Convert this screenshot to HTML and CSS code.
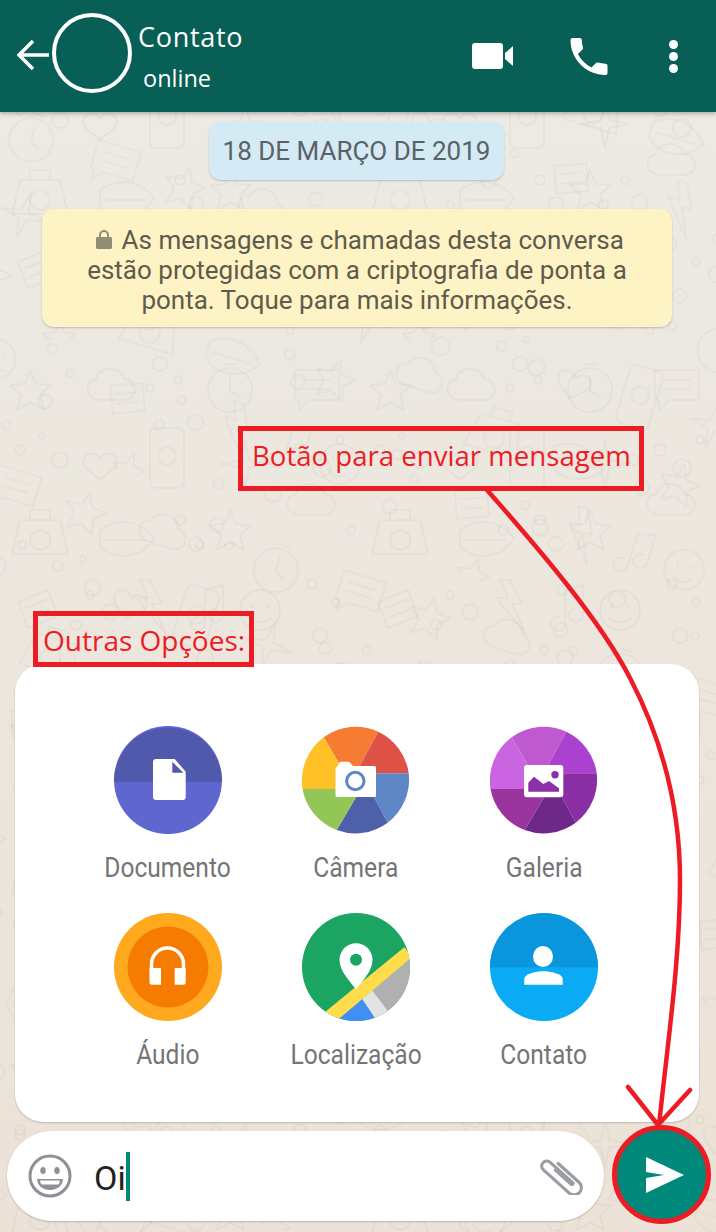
FILE: index.html
```html
<!DOCTYPE html>
<html lang="pt-BR">
<head>
    <meta charset="UTF-8">
    <meta name="viewport" content="width=device-width, initial-scale=1.0">
    <title>Contato</title>
    <link rel="stylesheet" href="styles.css">
</head>
<body>
<div class="screen">
    <!-- doodle wallpaper -->
    <svg class="wallpaper" width="716" height="1232">
        <defs>
            <pattern id="doodles" width="360" height="340" patternUnits="userSpaceOnUse">
                <g fill="none" stroke="#000" stroke-opacity=".035" stroke-width="1.700" stroke-linejoin="round" stroke-linecap="round">
                    <path d="M30 30l6 14 15 1-11 10 4 15-14-8-13 8 4-15-11-10 15-1z"/>
                    <path d="M100 60c-14 0-18-18-4-21 3-14 26-13 28 0 14 1 15 20 0 21z"/>
                    <circle cx="160" cy="24" r="7"/><circle cx="178" cy="40" r="4"/><circle cx="150" cy="48" r="4"/>
                    <circle cx="230" cy="50" r="22"/><path d="M230 36v15l10 6M224 24h12"/>
                    <path d="M295 30h44v30h-30l-10 10v-10h-4zM304 40h26M304 49h26"/>
                    <circle cx="20" cy="110" r="5"/><circle cx="60" cy="120" r="8"/><circle cx="42" cy="96" r="3"/>
                    <path d="M100 140c-8-8-20-12-16-22 4-7 13-5 16 1 3-6 12-8 16-1 4 10-8 14-16 22z"/>
                    <rect x="150" y="88" width="34" height="60" rx="6"/><circle cx="167" cy="116" r="9"/>
                    <path d="M245 100l4 20 20 4-20 4-4 20-4-20-20-4 20-4z"/>
                    <circle cx="300" cy="110" r="6"/><circle cx="322" cy="128" r="9"/><circle cx="340" cy="100" r="4"/>
                    <path d="M20 180h40l8 34H12zM30 180v-10h20v10M40 190a10 10 0 1 0 .1 0"/>
                    <path d="M100 190c20-14 42-8 54 8-12 20-40 24-54 8zM106 200h40"/>
                    <circle cx="180" cy="180" r="5"/><circle cx="196" cy="204" r="7"/>
                    <path d="M230 170l6 14 15 1-11 10 4 15-14-8-13 8 4-15-11-10 15-1z"/>
                    <path d="M300 175c-14 0-18-18-4-21 3-14 26-13 28 0 14 1 15 20 0 21z"/>
                    <path d="M18 262l30-12 10 26-30 12zM26 268l20-8M30 277l20-8"/>
                    <circle cx="90" cy="255" r="4"/><circle cx="110" cy="272" r="8"/><circle cx="76" cy="285" r="5"/>
                    <path d="M150 240l12 24-10 0 14 30-30-36 12 0-8-18z"/>
                    <path d="M205 250v34a7 7 0 1 1-6-7M205 250l18-5v30a7 7 0 1 1-6-7"/>
                    <circle cx="260" cy="270" r="20"/><path d="M252 264v3M268 264v3M250 278c6 6 14 6 20 0"/>
                    <circle cx="312" cy="244" r="5"/><circle cx="336" cy="262" r="4"/><circle cx="320" cy="296" r="7"/>
                    <path d="M60 320l4 12 12 2-9 8 2 12-9-6-11 6 3-12-9-8 12-2z"/>
                    <circle cx="150" cy="325" r="5"/><circle cx="205" cy="318" r="8"/><circle cx="290" cy="330" r="4"/>
                </g>
            </pattern>
            <pattern id="doodlesTurned" href="#doodles" patternTransform="translate(170 130) rotate(17)"/>
        </defs>
        <rect width="716" height="1232" fill="url(#doodles)"/>
        <rect width="716" height="1232" fill="url(#doodlesTurned)"/>
    </svg>

    <header class="topbar">
        <svg class="back" width="32" height="30" viewBox="0 0 32 30"><path d="M32 15H2M16 1L2 15l14 14" fill="none" stroke="#fff" stroke-width="3.500"/></svg>
        <div class="avatar"></div>
        <div class="contact">
            <div class="contact-name">Contato</div>
            <div class="contact-status">online</div>
        </div>
        <svg class="video" width="42" height="26" viewBox="0 0 42 26"><rect width="31" height="26" rx="3" fill="#fff"/><path d="M33 10l8-7v20l-8-7z" fill="#fff"/></svg>
        <svg class="phone" width="38" height="37" viewBox="3 3 18 18"><path fill="#fff" d="M6.62 10.79c1.44 2.83 3.76 5.14 6.59 6.59l2.2-2.2c.27-.27.67-.36 1.02-.24 1.12.37 2.33.57 3.57.57.55 0 1 .45 1 1V20c0 .55-.45 1-1 1-9.39 0-17-7.61-17-17 0-.55.45-1 1-1h3.5c.55 0 1 .45 1 1 0 1.25.2 2.45.57 3.57.11.35.03.74-.25 1.02l-2.2 2.2z"/></svg>
        <div class="menu"><i></i><i></i><i></i></div>
    </header>

    <main class="chat">
        <div class="date-chip">18 DE MARÇO DE 2019</div>
        <div class="notice">
            <svg class="lock" width="16" height="19" viewBox="0 0 16 19"><path fill="#938d76" d="M1.5 7H3V5a5 5 0 0 1 10 0v2h1.5c.8 0 1.5.7 1.5 1.500v9c0 .8-.7 1.500-1.500 1.500h-13C.7 19 0 18.300 0 17.500v-9C0 7.700.7 7 1.500 7zM5 7h6V5a3 3 0 0 0-6 0z"/></svg>
            As mensagens e chamadas desta conversa<br>
            estão protegidas com a criptografia de ponta a<br>
            ponta. Toque para mais informações.
        </div>

        <section class="attach-panel">
            <div class="attach-grid">
                <div class="attach-item">
                    <svg width="108" height="108" viewBox="0 0 108 108">
                        <circle cx="54" cy="54" r="54" fill="#5f66cd"/>
                        <path d="M0 55.700a54 54 0 0 1 108 0z" fill="#5159ad"/>
                        <path fill="#fff" d="M42 33h18.700L71.700 45.700V71a3 3 0 0 1-3 3H42a3 3 0 0 1-3-3V36a3 3 0 0 1 3-3z"/>
                        <path fill="#5159ad" d="M58.300 35.700v11h11z"/>
                    </svg>
                    <span class="attach-label">Documento</span>
                </div>
                <div class="attach-item">
                    <svg width="108" height="108" viewBox="0 0 108 108">
                        <path fill="#f57c32" d="M54 54L39 40.700 21.700 11.300A54 54 0 0 1 76.300 5.700L57.300 40.700z"/>
                        <path fill="#df5247" d="M54 54L57.300 40.700 76.300 5.700A54 54 0 0 1 106.700 47.300H74z"/>
                        <path fill="#5f87c6" d="M54 54L74 47.300H106.700A54 54 0 0 1 85.700 96.700L72 71.300z"/>
                        <path fill="#4f60ab" d="M54 54L72 71.300 85.700 96.700A54 54 0 0 1 34.700 104L54 71.300z"/>
                        <path fill="#92c656" d="M54 54V71.300L34.700 104A54 54 0 0 1 .5 63H34z"/>
                        <path fill="#ffc127" d="M54 54L34 63H.5A54 54 0 0 1 21.700 11.300L39 40.700z"/>
                        <path fill="#fff" d="M35 41l3-5.300h9l4 4.300h21.500a1.500 1.500 0 0 1 1.500 1.500v28a1.500 1.500 0 0 1-1.500 1.500H35a1.500 1.500 0 0 1-1.500-1.500V43a2 2 0 0 1 1.500-2z"/>
                        <circle cx="53.300" cy="55" r="8.700" fill="#fff" stroke="#5f87c6" stroke-width="3"/>
                    </svg>
                    <span class="attach-label">Câmera</span>
                </div>
                <div class="attach-item">
                    <svg width="108" height="108" viewBox="0 0 108 108">
                        <path fill="#bf59cf" d="M54 54L39 40.700 21.700 11.300A54 54 0 0 1 76.300 5.700L57.300 40.700z"/>
                        <path fill="#ab42cf" d="M54 54L57.300 40.700 76.300 5.700A54 54 0 0 1 106.700 47.300H74z"/>
                        <path fill="#8a2fa3" d="M54 54L74 47.300H106.700A54 54 0 0 1 85.700 96.700L72 71.300z"/>
                        <path fill="#6d2888" d="M54 54L72 71.300 85.700 96.700A54 54 0 0 1 34.700 104L54 71.300z"/>
                        <path fill="#9a359f" d="M54 54V71.300L34.700 104A54 54 0 0 1 .5 63H34z"/>
                        <path fill="#ca64e0" d="M54 54L34 63H.5A54 54 0 0 1 21.700 11.300L39 40.700z"/>
                        <rect x="34" y="39" width="39.300" height="32.300" rx="3" fill="#fff"/>
                        <circle cx="65" cy="48.700" r="3.700" fill="#8d2fa6"/>
                        <path fill="#8d2fa6" d="M38.300 65.700v-9l5.700-6 9.300 7.300 5.700-3 10 7.300v3.400z"/>
                    </svg>
                    <span class="attach-label">Galeria</span>
                </div>
                <div class="attach-item">
                    <svg width="108" height="108" viewBox="0 0 108 108">
                        <circle cx="54" cy="54" r="54" fill="#ffa91f"/>
                        <circle cx="54" cy="54" r="40.500" fill="#f57c00"/>
                        <path d="M37.500 60V51a16 16 0 0 1 32 0v9" fill="none" stroke="#fff" stroke-width="3.500"/>
                        <path fill="#fff" d="M35.500 55H47v16.700h-9a2.500 2.500 0 0 1-2.500-2.500zM60.700 55h11v14.200a2.500 2.500 0 0 1-2.500 2.500h-8.500z"/>
                    </svg>
                    <span class="attach-label">Áudio</span>
                </div>
                <div class="attach-item">
                    <svg width="108" height="108" viewBox="0 0 108 108">
                        <defs><clipPath id="mapClip"><circle cx="54" cy="54" r="54"/></clipPath></defs>
                        <g clip-path="url(#mapClip)">
                            <rect width="108" height="108" fill="#1ba462"/>
                            <path fill="#b0b0b0" d="M70 77.300L110 44v70H90z"/>
                            <path fill="#e3e3e3" d="M60 86l10-8.700L88 101 76 110z"/>
                            <path fill="#3f8ff5" d="M30 110l30-24 16 24z"/>
                            <path fill="#ffdd4a" d="M20 101.500L102.300 34.300 110 44 32 110z"/>
                        </g>
                        <path fill="#fff" d="M54 76.500C47 67 37.500 58 37.500 46.700a16.500 16.500 0 0 1 33 0C70.500 58 61 67 54 76.500z"/>
                        <circle cx="54" cy="46.700" r="6" fill="#1ba462"/>
                    </svg>
                    <span class="attach-label">Localização</span>
                </div>
                <div class="attach-item">
                    <svg width="108" height="108" viewBox="0 0 108 108">
                        <circle cx="54" cy="54" r="54" fill="#0baaf5"/>
                        <path d="M0 54.300a54 54 0 0 1 108 0z" fill="#0a95dc"/>
                        <ellipse cx="53" cy="43.500" rx="10" ry="10.500" fill="#fff"/>
                        <path fill="#fff" d="M34.300 71.700v-6c0-5 12-7.500 19-7.500s19.400 2.500 19.400 7.500v6z"/>
                    </svg>
                    <span class="attach-label">Contato</span>
                </div>
            </div>
        </section>

        <div class="composer-row">
            <div class="composer">
                <svg class="emoji" width="44" height="44" viewBox="0 0 44 44">
                    <circle cx="22" cy="22" r="20" fill="none" stroke="#8d9196" stroke-width="3"/>
                    <ellipse cx="15" cy="16.500" rx="2.700" ry="3.500" fill="#8d9196"/>
                    <ellipse cx="29" cy="16.500" rx="2.700" ry="3.500" fill="#8d9196"/>
                    <path d="M9 25h26c-.5 7-6 11-13 11S9.500 32 9 25z" fill="#8d9196"/>
                    <path d="M12 26.500h20c-.3 2-.8 3-1.500 4h-17c-.7-1-1.200-2-1.500-4z" fill="#fff"/>
                </svg>
                <div class="composer-text"><span class="composer-value">Oi</span><span class="caret"></span></div>
                <svg class="clip" width="44" height="38" viewBox="0 0 44 38">
                    <path transform="translate(22 19) rotate(-48) scale(1.120)" d="M6 -10V15a6.500 6.500 0 0 1-13 0V-16a4.500 4.500 0 0 1 9 0V11a1 1 0 0 1-2 0V-8" fill="none" stroke="#9a9ea2" stroke-width="2.800" stroke-linecap="round"/>
                </svg>
            </div>
            <button class="send">
                <svg width="38" height="36" viewBox="0 0 38 36"><path fill="#fff" d="M0 0L38 18 0 36V21L18 18 0 15z"/></svg>
            </button>
        </div>
    </main>

    <!-- red notes drawn over the screenshot -->
    <div class="note note-send">Botão para enviar mensagem</div>
    <div class="note note-options">Outras Opções:</div>
    <svg class="note-arrow" width="716" height="1232">
        <path d="M487 490C540 550 600 620 630 678C665 745 680 810 680 880C680 960 668 1040 659 1125M628 1087L658 1125L690 1090" fill="none" stroke="#ed1c24" stroke-width="4.500" stroke-linecap="round"/>
    </svg>
</div>
</body>
</html>
```

FILE: styles.css
```css
*, *::before, *::after{
    box-sizing: border-box;
    margin: 0;
    padding: 0;
}

body{
    font-family: Roboto, sans-serif;
    background: #ece6dc;
}

.screen{
    position: relative;
    width: 716px;
    height: 1232px;
    overflow: hidden;
    display: flex;
    flex-direction: column;
    background: linear-gradient(#ecebe5, #ece2d7);
}

.wallpaper{
    position: absolute;
    top: 0;
    left: 0;
}

/* top bar */
.topbar{
    position: relative;
    flex: 0 0 112px;
    display: flex;
    align-items: flex-start;
    background: #085f55;
    box-shadow: 0 2px 4px rgba(0,0,0,.25);
    color: #fff;
}

.back{
    margin: 40px 0 0 17px;
    flex: none;
}

.avatar{
    flex: none;
    width: 80px;
    height: 80px;
    margin: 13px 0 0 3px;
    border: 4px solid #fff;
    border-radius: 50%;
}

.contact{
    margin: 18px 0 0 6px;
    font-family: "Open Sans", sans-serif;
    flex: 1;
}

.contact-name{
    font-size: 27px;
    line-height: 38px;
    letter-spacing: .7px;
}

.contact-status{
    margin: 3px 0 0 5px;
    font-size: 23.500px;
    line-height: 38px;
}

.video{
    margin-top: 43px;
    flex: none;
}

.phone{
    margin: 38px 0 0 56px;
    flex: none;
}

.menu{
    margin: 40px 38px 0 61px;
    display: flex;
    flex-direction: column;
    gap: 3px;

    i{
        display: block;
        width: 9px;
        height: 9px;
        border-radius: 50%;
        background: #fff;
    }
}

/* chat */
.chat{
    position: relative;
    flex: 1;
    display: flex;
    flex-direction: column;
}

.date-chip{
    align-self: flex-start;
    margin: 10px 0 0 209px;
    width: 295px;
    height: 58px;
    line-height: 58px;
    text-align: center;
    font-size: 26px;
    color: #5b6166;
    background: #d4eaf4;
    border-radius: 12px;
    box-shadow: 0 1px 2px rgba(0,0,0,.2);
}

.notice{
    margin: 29px 44px 0 42px;
    height: 118px;
    padding-top: 16px;
    text-align: center;
    font-size: 26px;
    line-height: 30px;
    color: #5f5b4c;
    background: #fef3c5;
    border-radius: 12px;
    box-shadow: 0 1px 2px rgba(0,0,0,.2);
}

.lock{
    margin: 0 3px 0 6px;
}

/* attachment panel */
.attach-panel{
    margin: auto 17px 0 15px;
    height: 458px;
    padding: 62px 2px 0 0;
    background: #fff;
    border-radius: 28px;
    box-shadow: 0 1px 2px rgba(0,0,0,.2);
}

.attach-grid{
    display: grid;
    grid-template-columns: repeat(3, 188px);
    grid-auto-rows: 187px;
    justify-content: center;
}

.attach-item{
    display: flex;
    flex-direction: column;
    align-items: center;
}

.attach-label{
    margin-top: 16px;
    font-size: 27px;
    line-height: 36px;
    color: #757575;
    white-space: nowrap;
    transform: scaleX(.91);
}

/* bottom row */
.composer-row{
    display: flex;
    align-items: center;
    gap: 8px;
    margin: 9px 0 11px 7px;
    height: 90px;
}

.composer{
    width: 597px;
    height: 90px;
    display: flex;
    align-items: center;
    padding-left: 21px;
    background: #fff;
    border-radius: 45px;
    box-shadow: 0 1px 2px rgba(0,0,0,.2);
}

.composer-text{
    flex: 1;
    margin-left: 22px;
    display: flex;
    align-items: center;
    font-size: 34px;
    color: #222;
}

.composer-value{
    margin-top: 3px;
}

.caret{
    width: 4px;
    height: 49px;
    background: #00897b;
}

.clip{
    margin-right: 20px;
}

.send{
    flex: none;
    width: 99px;
    height: 99px;
    margin-top: -3px;
    display: flex;
    align-items: center;
    justify-content: center;
    padding-left: 6px;
    background: #00897b;
    border: 5px solid #ed1c24;
    border-radius: 50%;
}

/* notes */
.note{
    position: absolute;
    border: 5px solid #ed1c24;
    font-family: "Open Sans", sans-serif;
    color: #ed1c24;
    white-space: nowrap;
}

.note-send{
    left: 238px;
    top: 426px;
    width: 406px;
    height: 65px;
    padding-left: 9px;
    font-size: 27.600px;
    line-height: 49px;
}

.note-options{
    left: 33px;
    top: 611px;
    width: 221px;
    height: 56px;
    padding-left: 5px;
    font-size: 28px;
    line-height: 49px;
}

.note-arrow{
    position: absolute;
    top: 0;
    left: 0;
    pointer-events: none;
}
```
